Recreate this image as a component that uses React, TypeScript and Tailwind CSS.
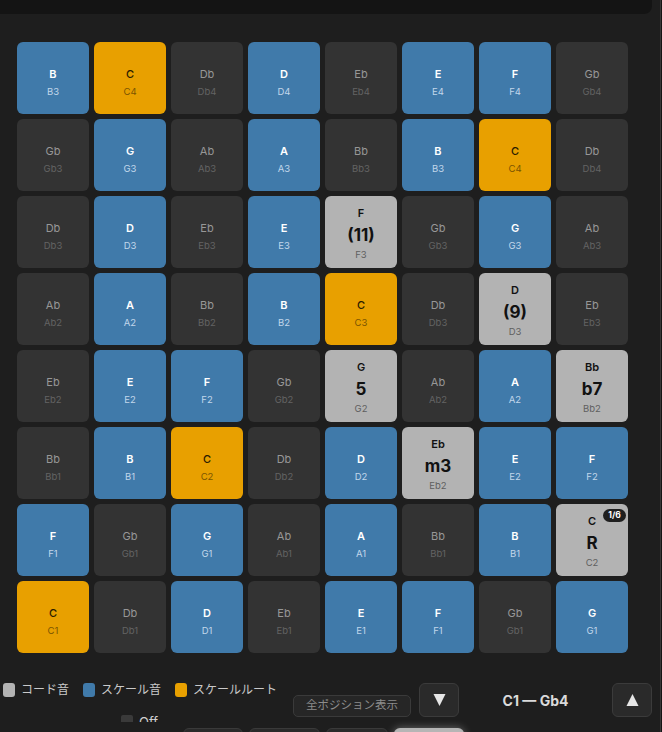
import React from 'react';

type Kind = 'scale' | 'root' | 'off' | 'chord';

interface Cell {
    name: string;
    octave: string;
    kind: Kind;
    degree?: string;
    badge?: string;
}

const s = (name: string, octave: string): Cell => ({ name, octave, kind: 'scale' });
const r = (name: string, octave: string): Cell => ({ name, octave, kind: 'root' });
const o = (name: string, octave: string): Cell => ({ name, octave, kind: 'off' });
const c = (name: string, octave: string, degree: string, badge?: string): Cell => ({ name, octave, kind: 'chord', degree, badge });

const ROWS: Cell[][] = [
    [s('B', 'B3'), r('C', 'C4'), o('Db', 'Db4'), s('D', 'D4'), o('Eb', 'Eb4'), s('E', 'E4'), s('F', 'F4'), o('Gb', 'Gb4')],
    [o('Gb', 'Gb3'), s('G', 'G3'), o('Ab', 'Ab3'), s('A', 'A3'), o('Bb', 'Bb3'), s('B', 'B3'), r('C', 'C4'), o('Db', 'Db4')],
    [o('Db', 'Db3'), s('D', 'D3'), o('Eb', 'Eb3'), s('E', 'E3'), c('F', 'F3', '(11)'), o('Gb', 'Gb3'), s('G', 'G3'), o('Ab', 'Ab3')],
    [o('Ab', 'Ab2'), s('A', 'A2'), o('Bb', 'Bb2'), s('B', 'B2'), r('C', 'C3'), o('Db', 'Db3'), c('D', 'D3', '(9)'), o('Eb', 'Eb3')],
    [o('Eb', 'Eb2'), s('E', 'E2'), s('F', 'F2'), o('Gb', 'Gb2'), c('G', 'G2', '5'), o('Ab', 'Ab2'), s('A', 'A2'), c('Bb', 'Bb2', 'b7')],
    [o('Bb', 'Bb1'), s('B', 'B1'), r('C', 'C2'), o('Db', 'Db2'), s('D', 'D2'), c('Eb', 'Eb2', 'm3'), s('E', 'E2'), s('F', 'F2')],
    [s('F', 'F1'), o('Gb', 'Gb1'), s('G', 'G1'), o('Ab', 'Ab1'), s('A', 'A1'), o('Bb', 'Bb1'), s('B', 'B1'), c('C', 'C2', 'R', '1/6')],
    [r('C', 'C1'), o('Db', 'Db1'), s('D', 'D1'), o('Eb', 'Eb1'), s('E', 'E1'), s('F', 'F1'), o('Gb', 'Gb1'), s('G', 'G1')],
];

const CELL_STYLE: Record<Kind, { bg: string; name: string; octave: string }> = {
    scale: { bg: 'bg-[#407aaa]', name: 'text-white font-semibold', octave: 'text-[#c2d7ea]' },
    root: { bg: 'bg-[#e8a000]', name: 'text-[#2a1d00] font-medium', octave: 'text-[#7a5500]' },
    off: { bg: 'bg-[#333333]', name: 'text-[#979797]', octave: 'text-[#636363]' },
    chord: { bg: 'bg-[#b3b3b3]', name: 'text-[#111] font-semibold', octave: 'text-[#5f5f5f]' },
};

const FONT = { fontFamily: 'Inter, "Noto Sans CJK JP", sans-serif' };

const PadCell: React.FC<{ cell: Cell }> = ({ cell }) => {
    const st = CELL_STYLE[cell.kind];
    if (cell.kind === 'chord') {
        return (
            <div className={`relative h-[72px] w-[72px] rounded-[6px] ${st.bg} flex flex-col items-center pt-[10px]`}>
                <span className={`text-[11px] leading-[14px] ${st.name}`}>{cell.name}</span>
                <span className="mt-[5px] text-[17px] leading-[20px] font-bold text-[#111]">{cell.degree}</span>
                <span className={`mt-[4px] text-[9.5px] leading-[12px] ${st.octave}`}>{cell.octave}</span>
                {cell.badge && (
                    <span className="absolute top-[5px] right-[2px] h-[13px] w-[23px] rounded-full bg-[#1f1f1f] text-white text-[8.5px] leading-[13px] font-bold text-center">
                        {cell.badge}
                    </span>
                )}
            </div>
        );
    }
    return (
        <div className={`h-[72px] w-[72px] rounded-[6px] ${st.bg} flex flex-col items-center justify-center pt-[8px]`}>
            <span className={`text-[11px] leading-[14px] ${st.name}`}>{cell.name}</span>
            <span className={`mt-[5px] text-[9.5px] leading-[12px] ${st.octave}`}>{cell.octave}</span>
        </div>
    );
};

const Triangle: React.FC<{ up?: boolean }> = ({ up }) => (
    <svg width="13" height="14" viewBox="0 0 13 14">
        {up ? <polygon points="6.5,1 12.5,13 0.5,13" fill="#e6e6e6" /> : <polygon points="0.5,1 12.5,1 6.5,13" fill="#e6e6e6" />}
    </svg>
);

const LegendItem: React.FC<{ color: string; label: string }> = ({ color, label }) => (
    <div className="flex items-center gap-[6px]">
        <span className={`h-[14px] w-[12px] rounded-[3px] ${color}`} />
        <span className="text-[12px] leading-[14px] text-[#c9c9c9]">{label}</span>
    </div>
);

export default function App() {
    return (
        <div className="h-[732px] w-[662px] overflow-hidden bg-[#1e1e1e] flex" style={FONT}>
            <div className="w-[660px] flex flex-col">
                {/* header strip */}
                <div className="h-[14px] w-[652px] shrink-0 bg-[#141414] rounded-br-[8px]" />

                {/* pad grid */}
                <div className="mt-[28px] ml-[17px] grid grid-cols-[repeat(8,72px)] auto-rows-[72px] gap-[5px]">
                    {ROWS.flat().map((cell, i) => (
                        <PadCell key={i} cell={cell} />
                    ))}
                </div>

                {/* controls */}
                <div className="mt-[30px] flex h-[34px] shrink-0">
                    <div className="ml-[3px] flex items-start gap-[14px]">
                        <LegendItem color="bg-[#b3b3b3]" label="コード音" />
                        <LegendItem color="bg-[#407aaa]" label="スケール音" />
                        <LegendItem color="bg-[#e8a000]" label="スケールルート" />
                    </div>
                    <button className="ml-[16px] self-end h-[22px] w-[118px] rounded-[5px] border border-[#3a3a3a] bg-[#262626] text-[11.5px] text-[#8c8c8c]">
                        全ポジション表示
                    </button>
                    <button className="ml-[8px] h-[34px] w-[40px] rounded-[6px] border border-[#3b3b3b] bg-[#2a2a2a] flex items-center justify-center">
                        <Triangle />
                    </button>
                    <div className="flex-1 flex items-center justify-center text-[14px] font-bold text-[#dadada]">
                        C1 — Gb4
                    </div>
                    <button className="mr-[8px] h-[34px] w-[40px] rounded-[6px] border border-[#3b3b3b] bg-[#2a2a2a] flex items-center justify-center">
                        <Triangle up />
                    </button>
                </div>

                <div className="-mt-[2px] h-[7px] shrink-0 overflow-hidden pl-[121px] flex items-start gap-[6px]">
                    <span className="mt-[0px] h-[12px] w-[12px] rounded-[2px] bg-[#3a3a3a]" />
                    <span className="text-[13px] leading-[14px] text-[#cfcfcf]">Off</span>
                </div>

                <div className="mt-[6px] ml-[183px] flex gap-[6px] shrink-0">
                    <div className="h-[24px] w-[60px] rounded-[6px] border border-[#3a3a3a] bg-[#2a2a2a]" />
                    <div className="h-[24px] w-[71px] rounded-[6px] border border-[#3a3a3a] bg-[#2a2a2a]" />
                    <div className="h-[24px] w-[62px] rounded-[6px] border border-[#3a3a3a] bg-[#2a2a2a]" />
                    <div className="h-[24px] w-[70px] rounded-[6px] bg-[#b5b5b5] shadow-[0_0_8px_rgba(255,255,255,0.35)]" />
                </div>
            </div>
            <div className="w-[1px] bg-[#383838]" />
            <div className="w-[1px] bg-[#151515]" />
        </div>
    );
}
